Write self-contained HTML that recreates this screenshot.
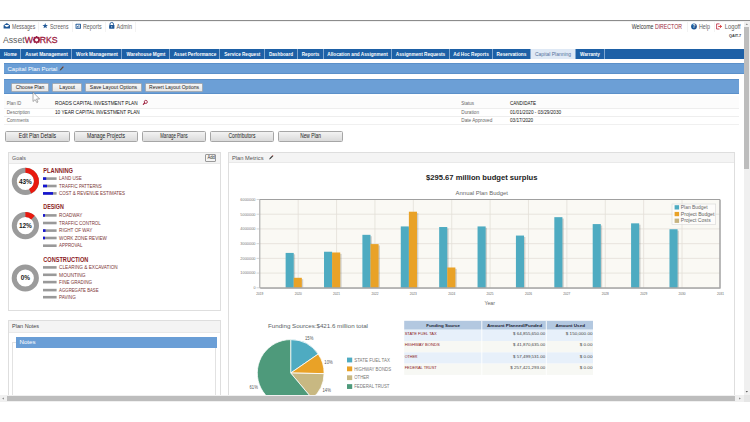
<!DOCTYPE html>
<html><head><meta charset="utf-8">
<style>
*{box-sizing:border-box;margin:0;padding:0}
html,body{width:750px;height:422px;overflow:hidden;background:#fff;font-family:"Liberation Sans",sans-serif;color:#333}
#w{position:absolute;left:0;top:0;width:750px;height:422px;background:#fff}
.a{position:absolute}
.nav{position:absolute;left:0;top:48.6px;width:743.5px;height:10.3px;background:#1d60a6}
.tab{position:absolute;top:0;height:10.3px;border-right:1px solid #7fa6d0}
.btn{position:absolute;height:9px;background:linear-gradient(#f6f6f6,#e6e6e6);border:0.8px solid #a3abb5;border-radius:1px}
.btn2{position:absolute;top:131px;height:10.5px;background:linear-gradient(#f3f3f3,#dadada);border:0.9px solid #a6a6a6;border-radius:1.5px}
.panel{position:absolute;border:1px solid #dedede;background:#fff}
.ph{position:absolute;left:0;top:0;right:0;background:#f4f4f4;border-bottom:1px solid #e9e9e9}
.sep{position:absolute;top:21.5px;width:0.8px;height:10.5px;background:#f3f3f3}
</style></head><body><div id="w">
<div class="a" style="left:0;top:19.6px;width:750px;height:1.3px;background:#8c8c8c"></div>
<div class="a" style="left:0;top:21px;width:744px;height:1px;background:#f2f2f2"></div>
<div class="sep" style="left:38px"></div>
<div class="sep" style="left:71.5px"></div>
<div class="sep" style="left:104.5px"></div>
<div class="sep" style="left:135px"></div>
<div class="sep" style="left:686.5px"></div>
<div class="sep" style="left:713.5px"></div>
<div class="nav">
<div class="tab" style="left:0;width:20.8px"></div>
<div class="tab" style="left:20.8px;width:51.4px"></div>
<div class="tab" style="left:72.2px;width:49.6px"></div>
<div class="tab" style="left:121.8px;width:48.2px"></div>
<div class="tab" style="left:170px;width:50px"></div>
<div class="tab" style="left:220px;width:44.5px"></div>
<div class="tab" style="left:264.5px;width:33px"></div>
<div class="tab" style="left:297.5px;width:26px"></div>
<div class="tab" style="left:323.5px;width:68px"></div>
<div class="tab" style="left:391.5px;width:58px"></div>
<div class="tab" style="left:449.5px;width:43px"></div>
<div class="tab" style="left:492.5px;width:38px"></div>
<div class="tab" style="left:530.5px;width:45px;background:#dfe9f5"></div>
<div class="tab" style="left:575.5px;width:29px"></div>
</div>
<div class="a" style="left:4px;top:63.1px;width:739.5px;height:11.1px;background:#6a9ed6;border-top:0.6px solid #5b90c9;border-bottom:0.6px solid #5b90c9"></div>
<div class="a" style="left:4px;top:79px;width:735px;height:15.1px;background:#6c9fd6;border-top:0.6px solid #5b90c9;border-bottom:0.6px solid #5b90c9"></div>
<div class="btn" style="left:10.9px;top:82.8px;width:37.9px"></div>
<div class="btn" style="left:52px;top:82.8px;width:30.4px"></div>
<div class="btn" style="left:84.7px;top:82.8px;width:57.4px"></div>
<div class="btn" style="left:144.9px;top:82.8px;width:58.2px"></div>
<div class="a" style="left:4px;top:96px;width:735px;height:13.2px;background:#fcfcfc;border-bottom:1px solid #eeeeee"></div>
<div class="a" style="left:4px;top:109.2px;width:735px;height:8px;border-bottom:1px solid #eeeeee"></div>
<div class="a" style="left:4px;top:117.2px;width:735px;height:8px;border-bottom:1px solid #f0f0f0"></div>
<div class="btn2" style="left:5px;width:65px"></div>
<div class="btn2" style="left:74px;width:64px"></div>
<div class="btn2" style="left:142px;width:64px"></div>
<div class="btn2" style="left:210px;width:64px"></div>
<div class="btn2" style="left:278px;width:65px"></div>
<div class="panel" style="left:8px;top:152px;width:213px;height:159px">
 <div class="ph" style="height:11.3px"></div>
 <div class="a" style="left:196.1px;top:0.5px;width:11.2px;height:8.2px;border:0.9px solid #9a9a9a;border-radius:1px;background:#f4f4f4"></div>
</div>
<div class="panel" style="left:8px;top:320px;width:213px;height:90px">
 <div class="ph" style="height:11.5px"></div>
 <div class="a" style="left:3.2px;top:20.7px;width:204px;height:70px;border:1px solid #e2e2e2"></div>
 <div class="a" style="left:7px;top:15.7px;width:201.3px;height:11.2px;background:#6a9ed6"></div>
</div>
<div class="panel" style="left:228px;top:152px;width:507px;height:260px">
 <div class="ph" style="height:10.1px"></div>
</div>
<svg class="a" style="left:0;top:0" width="750" height="422" viewBox="0 0 750 422">
<circle cx="25.4" cy="181.3" r="11.1" fill="none" stroke="#9b9b9b" stroke-width="5.0"/>
<path d="M25.4 170.20000000000002 A11.1 11.1 0 0 1 30.13 191.34" fill="none" stroke="#e8190f" stroke-width="5.0"/>
<text x="25.4" y="183.70" font-family="Liberation Sans, sans-serif" font-size="6.8" fill="#1a1a1a" text-anchor="middle" font-weight="bold" textLength="13" lengthAdjust="spacingAndGlyphs">43%</text>
<text x="43.3" y="172.75" font-family="Liberation Sans, sans-serif" font-size="6.6" fill="#8b1c24" font-weight="bold" textLength="29.7" lengthAdjust="spacingAndGlyphs">PLANNING</text>
<rect x="43" y="177.30" width="13.6" height="2.6" fill="#999"/>
<rect x="43" y="177.30" width="3.2" height="2.6" fill="#1414d2"/>
<text x="59.1" y="180.35" font-family="Liberation Sans, sans-serif" font-size="4.9" fill="#7b3535" textLength="22.7" lengthAdjust="spacingAndGlyphs">LAND USE</text>
<rect x="43" y="184.70" width="13.6" height="2.6" fill="#999"/>
<rect x="43" y="184.70" width="4" height="2.6" fill="#1414d2"/>
<text x="59.1" y="187.75" font-family="Liberation Sans, sans-serif" font-size="4.9" fill="#7b3535" textLength="42.6" lengthAdjust="spacingAndGlyphs">TRAFFIC PATTERNS</text>
<rect x="43" y="192.10" width="13.6" height="2.6" fill="#999"/>
<rect x="43" y="192.10" width="10" height="2.6" fill="#1414d2"/>
<text x="59.1" y="195.15" font-family="Liberation Sans, sans-serif" font-size="4.9" fill="#7b3535" textLength="66" lengthAdjust="spacingAndGlyphs">COST &amp; REVENUE ESTIMATES</text>
<circle cx="25.4" cy="225.7" r="11.1" fill="none" stroke="#9b9b9b" stroke-width="5.0"/>
<path d="M25.4 214.6 A11.1 11.1 0 0 1 33.00 217.61" fill="none" stroke="#e8190f" stroke-width="5.0"/>
<text x="25.4" y="228.10" font-family="Liberation Sans, sans-serif" font-size="6.8" fill="#1a1a1a" text-anchor="middle" font-weight="bold" textLength="13" lengthAdjust="spacingAndGlyphs">12%</text>
<text x="43.3" y="209.25" font-family="Liberation Sans, sans-serif" font-size="6.6" fill="#8b1c24" font-weight="bold" textLength="20.6" lengthAdjust="spacingAndGlyphs">DESIGN</text>
<rect x="43" y="214.10" width="13.6" height="2.6" fill="#999"/>
<rect x="43" y="214.10" width="2" height="2.6" fill="#1414d2"/>
<text x="59.1" y="217.15" font-family="Liberation Sans, sans-serif" font-size="4.9" fill="#7b3535" textLength="23.3" lengthAdjust="spacingAndGlyphs">ROADWAY</text>
<rect x="43" y="221.70" width="13.6" height="2.6" fill="#999"/>
<text x="59.1" y="224.75" font-family="Liberation Sans, sans-serif" font-size="4.9" fill="#7b3535" textLength="41.7" lengthAdjust="spacingAndGlyphs">TRAFFIC CONTROL</text>
<rect x="43" y="229.30" width="13.6" height="2.6" fill="#999"/>
<rect x="43" y="229.30" width="2.5" height="2.6" fill="#1414d2"/>
<text x="59.1" y="232.35" font-family="Liberation Sans, sans-serif" font-size="4.9" fill="#7b3535" textLength="33.2" lengthAdjust="spacingAndGlyphs">RIGHT OF WAY</text>
<rect x="43" y="236.70" width="13.6" height="2.6" fill="#999"/>
<rect x="43" y="236.70" width="2" height="2.6" fill="#1414d2"/>
<text x="59.1" y="239.75" font-family="Liberation Sans, sans-serif" font-size="4.9" fill="#7b3535" textLength="47.8" lengthAdjust="spacingAndGlyphs">WORK ZONE REVIEW</text>
<rect x="43" y="244.40" width="13.6" height="2.6" fill="#999"/>
<text x="59.1" y="247.45" font-family="Liberation Sans, sans-serif" font-size="4.9" fill="#7b3535" textLength="23.4" lengthAdjust="spacingAndGlyphs">APPROVAL</text>
<circle cx="25.3" cy="278" r="11.1" fill="none" stroke="#9b9b9b" stroke-width="5.0"/>
<text x="25.3" y="280.40" font-family="Liberation Sans, sans-serif" font-size="6.8" fill="#1a1a1a" text-anchor="middle" font-weight="bold" textLength="9.3" lengthAdjust="spacingAndGlyphs">0%</text>
<text x="43.3" y="261.75" font-family="Liberation Sans, sans-serif" font-size="6.6" fill="#8b1c24" font-weight="bold" textLength="45" lengthAdjust="spacingAndGlyphs">CONSTRUCTION</text>
<rect x="43" y="266.10" width="13.6" height="2.6" fill="#999"/>
<text x="59.1" y="269.15" font-family="Liberation Sans, sans-serif" font-size="4.9" fill="#7b3535" textLength="58.6" lengthAdjust="spacingAndGlyphs">CLEARING &amp; EXCAVATION</text>
<rect x="43" y="273.50" width="13.6" height="2.6" fill="#999"/>
<text x="59.1" y="276.55" font-family="Liberation Sans, sans-serif" font-size="4.9" fill="#7b3535" textLength="26.5" lengthAdjust="spacingAndGlyphs">MOUNTING</text>
<rect x="43" y="280.80" width="13.6" height="2.6" fill="#999"/>
<text x="59.1" y="283.85" font-family="Liberation Sans, sans-serif" font-size="4.9" fill="#7b3535" textLength="32.9" lengthAdjust="spacingAndGlyphs">FINE GRADING</text>
<rect x="43" y="288.80" width="13.6" height="2.6" fill="#999"/>
<text x="59.1" y="291.85" font-family="Liberation Sans, sans-serif" font-size="4.9" fill="#7b3535" textLength="39.5" lengthAdjust="spacingAndGlyphs">AGGREGATE BASE</text>
<rect x="43" y="295.90" width="13.6" height="2.6" fill="#999"/>
<text x="59.1" y="298.95" font-family="Liberation Sans, sans-serif" font-size="4.9" fill="#7b3535" textLength="16.6" lengthAdjust="spacingAndGlyphs">PAVING</text>
<rect x="259.8" y="199.5" width="460.59999999999997" height="88.30000000000001" fill="#faf9f4"/>
<line x1="259.8" y1="214.22" x2="720.4" y2="214.22" stroke="#e3e0d8" stroke-width="0.8"/>
<line x1="259.8" y1="228.93" x2="720.4" y2="228.93" stroke="#e3e0d8" stroke-width="0.8"/>
<line x1="259.8" y1="243.65" x2="720.4" y2="243.65" stroke="#e3e0d8" stroke-width="0.8"/>
<line x1="259.8" y1="258.37" x2="720.4" y2="258.37" stroke="#e3e0d8" stroke-width="0.8"/>
<line x1="259.8" y1="273.08" x2="720.4" y2="273.08" stroke="#e3e0d8" stroke-width="0.8"/>
<line x1="298.18" y1="199.5" x2="298.18" y2="287.8" stroke="#e3e0d8" stroke-width="0.8"/>
<line x1="336.57" y1="199.5" x2="336.57" y2="287.8" stroke="#e3e0d8" stroke-width="0.8"/>
<line x1="374.95" y1="199.5" x2="374.95" y2="287.8" stroke="#e3e0d8" stroke-width="0.8"/>
<line x1="413.33" y1="199.5" x2="413.33" y2="287.8" stroke="#e3e0d8" stroke-width="0.8"/>
<line x1="451.72" y1="199.5" x2="451.72" y2="287.8" stroke="#e3e0d8" stroke-width="0.8"/>
<line x1="490.10" y1="199.5" x2="490.10" y2="287.8" stroke="#e3e0d8" stroke-width="0.8"/>
<line x1="528.48" y1="199.5" x2="528.48" y2="287.8" stroke="#e3e0d8" stroke-width="0.8"/>
<line x1="566.87" y1="199.5" x2="566.87" y2="287.8" stroke="#e3e0d8" stroke-width="0.8"/>
<line x1="605.25" y1="199.5" x2="605.25" y2="287.8" stroke="#e3e0d8" stroke-width="0.8"/>
<line x1="643.63" y1="199.5" x2="643.63" y2="287.8" stroke="#e3e0d8" stroke-width="0.8"/>
<line x1="682.02" y1="199.5" x2="682.02" y2="287.8" stroke="#e3e0d8" stroke-width="0.8"/>
<rect x="287.03" y="254.32" width="8.1" height="33.48" fill="#000" fill-opacity="0.16"/>
<rect x="285.63" y="252.92" width="8.1" height="34.88" fill="#4eabc1"/>
<rect x="295.13" y="279.19" width="8.1" height="8.61" fill="#000" fill-opacity="0.16"/>
<rect x="293.73" y="277.79" width="8.1" height="10.01" fill="#e9a227"/>
<rect x="325.42" y="253.14" width="8.1" height="34.66" fill="#000" fill-opacity="0.16"/>
<rect x="324.02" y="251.74" width="8.1" height="36.06" fill="#4eabc1"/>
<rect x="333.52" y="253.88" width="8.1" height="33.92" fill="#000" fill-opacity="0.16"/>
<rect x="332.12" y="252.48" width="8.1" height="35.32" fill="#e9a227"/>
<rect x="363.80" y="236.22" width="8.1" height="51.58" fill="#000" fill-opacity="0.16"/>
<rect x="362.40" y="234.82" width="8.1" height="52.98" fill="#4eabc1"/>
<rect x="371.90" y="245.49" width="8.1" height="42.31" fill="#000" fill-opacity="0.16"/>
<rect x="370.50" y="244.09" width="8.1" height="43.71" fill="#e9a227"/>
<rect x="402.18" y="227.83" width="8.1" height="59.97" fill="#000" fill-opacity="0.16"/>
<rect x="400.78" y="226.43" width="8.1" height="61.37" fill="#4eabc1"/>
<rect x="410.28" y="213.11" width="8.1" height="74.69" fill="#000" fill-opacity="0.16"/>
<rect x="408.88" y="211.71" width="8.1" height="76.09" fill="#e9a227"/>
<rect x="440.57" y="228.42" width="8.1" height="59.38" fill="#000" fill-opacity="0.16"/>
<rect x="439.17" y="227.02" width="8.1" height="60.78" fill="#4eabc1"/>
<rect x="448.67" y="268.89" width="8.1" height="18.91" fill="#000" fill-opacity="0.16"/>
<rect x="447.27" y="267.49" width="8.1" height="20.31" fill="#e9a227"/>
<rect x="478.95" y="227.83" width="8.1" height="59.97" fill="#000" fill-opacity="0.16"/>
<rect x="477.55" y="226.43" width="8.1" height="61.37" fill="#4eabc1"/>
<rect x="517.33" y="236.96" width="8.1" height="50.84" fill="#000" fill-opacity="0.16"/>
<rect x="515.93" y="235.56" width="8.1" height="52.24" fill="#4eabc1"/>
<rect x="555.72" y="218.56" width="8.1" height="69.24" fill="#000" fill-opacity="0.16"/>
<rect x="554.32" y="217.16" width="8.1" height="70.64" fill="#4eabc1"/>
<rect x="594.10" y="225.48" width="8.1" height="62.32" fill="#000" fill-opacity="0.16"/>
<rect x="592.70" y="224.08" width="8.1" height="63.72" fill="#4eabc1"/>
<rect x="632.48" y="224.74" width="8.1" height="63.06" fill="#000" fill-opacity="0.16"/>
<rect x="631.08" y="223.34" width="8.1" height="64.46" fill="#4eabc1"/>
<rect x="670.87" y="230.63" width="8.1" height="57.17" fill="#000" fill-opacity="0.16"/>
<rect x="669.47" y="229.23" width="8.1" height="58.57" fill="#4eabc1"/>
<rect x="259.8" y="199.5" width="459.99999999999994" height="88.30000000000001" fill="none" stroke="#a0a0a0" stroke-width="1.0"/>
<path d="M720.3 200.0 L720.3 288.40000000000003 L260.3 288.40000000000003" fill="none" stroke="#b0b0b0" stroke-width="1.0"/>
<text x="255.5" y="289.10" font-family="Liberation Sans, sans-serif" font-size="3.7" fill="#777" text-anchor="end">0</text>
<line x1="256.5" y1="287.80" x2="259" y2="287.80" stroke="#aaa" stroke-width="0.5"/>
<text x="255.5" y="274.38" font-family="Liberation Sans, sans-serif" font-size="3.7" fill="#777" text-anchor="end" textLength="15.2" lengthAdjust="spacingAndGlyphs">1000000</text>
<line x1="256.5" y1="273.08" x2="259" y2="273.08" stroke="#aaa" stroke-width="0.5"/>
<text x="255.5" y="259.67" font-family="Liberation Sans, sans-serif" font-size="3.7" fill="#777" text-anchor="end" textLength="15.2" lengthAdjust="spacingAndGlyphs">2000000</text>
<line x1="256.5" y1="258.37" x2="259" y2="258.37" stroke="#aaa" stroke-width="0.5"/>
<text x="255.5" y="244.95" font-family="Liberation Sans, sans-serif" font-size="3.7" fill="#777" text-anchor="end" textLength="15.2" lengthAdjust="spacingAndGlyphs">3000000</text>
<line x1="256.5" y1="243.65" x2="259" y2="243.65" stroke="#aaa" stroke-width="0.5"/>
<text x="255.5" y="230.23" font-family="Liberation Sans, sans-serif" font-size="3.7" fill="#777" text-anchor="end" textLength="15.2" lengthAdjust="spacingAndGlyphs">4000000</text>
<line x1="256.5" y1="228.93" x2="259" y2="228.93" stroke="#aaa" stroke-width="0.5"/>
<text x="255.5" y="215.52" font-family="Liberation Sans, sans-serif" font-size="3.7" fill="#777" text-anchor="end" textLength="15.2" lengthAdjust="spacingAndGlyphs">5000000</text>
<line x1="256.5" y1="214.22" x2="259" y2="214.22" stroke="#aaa" stroke-width="0.5"/>
<text x="255.5" y="200.80" font-family="Liberation Sans, sans-serif" font-size="3.7" fill="#777" text-anchor="end" textLength="15.2" lengthAdjust="spacingAndGlyphs">6000000</text>
<line x1="256.5" y1="199.50" x2="259" y2="199.50" stroke="#aaa" stroke-width="0.5"/>
<text x="259.80" y="295.0" font-family="Liberation Sans, sans-serif" font-size="3.9" fill="#666" text-anchor="middle" textLength="7" lengthAdjust="spacingAndGlyphs">2019</text>
<text x="298.18" y="295.0" font-family="Liberation Sans, sans-serif" font-size="3.9" fill="#666" text-anchor="middle" textLength="7" lengthAdjust="spacingAndGlyphs">2020</text>
<text x="336.57" y="295.0" font-family="Liberation Sans, sans-serif" font-size="3.9" fill="#666" text-anchor="middle" textLength="7" lengthAdjust="spacingAndGlyphs">2021</text>
<text x="374.95" y="295.0" font-family="Liberation Sans, sans-serif" font-size="3.9" fill="#666" text-anchor="middle" textLength="7" lengthAdjust="spacingAndGlyphs">2022</text>
<text x="413.33" y="295.0" font-family="Liberation Sans, sans-serif" font-size="3.9" fill="#666" text-anchor="middle" textLength="7" lengthAdjust="spacingAndGlyphs">2023</text>
<text x="451.72" y="295.0" font-family="Liberation Sans, sans-serif" font-size="3.9" fill="#666" text-anchor="middle" textLength="7" lengthAdjust="spacingAndGlyphs">2024</text>
<text x="490.10" y="295.0" font-family="Liberation Sans, sans-serif" font-size="3.9" fill="#666" text-anchor="middle" textLength="7" lengthAdjust="spacingAndGlyphs">2025</text>
<text x="528.48" y="295.0" font-family="Liberation Sans, sans-serif" font-size="3.9" fill="#666" text-anchor="middle" textLength="7" lengthAdjust="spacingAndGlyphs">2026</text>
<text x="566.87" y="295.0" font-family="Liberation Sans, sans-serif" font-size="3.9" fill="#666" text-anchor="middle" textLength="7" lengthAdjust="spacingAndGlyphs">2027</text>
<text x="605.25" y="295.0" font-family="Liberation Sans, sans-serif" font-size="3.9" fill="#666" text-anchor="middle" textLength="7" lengthAdjust="spacingAndGlyphs">2028</text>
<text x="643.63" y="295.0" font-family="Liberation Sans, sans-serif" font-size="3.9" fill="#666" text-anchor="middle" textLength="7" lengthAdjust="spacingAndGlyphs">2029</text>
<text x="682.02" y="295.0" font-family="Liberation Sans, sans-serif" font-size="3.9" fill="#666" text-anchor="middle" textLength="7" lengthAdjust="spacingAndGlyphs">2030</text>
<text x="720.40" y="295.0" font-family="Liberation Sans, sans-serif" font-size="3.9" fill="#666" text-anchor="middle" textLength="7" lengthAdjust="spacingAndGlyphs">2031</text>
<text x="484.4" y="305.4" font-family="Liberation Sans, sans-serif" font-size="5.6" fill="#666" textLength="10.6" lengthAdjust="spacingAndGlyphs">Year</text>
<text x="426" y="180.2" font-family="Liberation Sans, sans-serif" font-size="7.6" fill="#222" font-weight="bold" textLength="111.4" lengthAdjust="spacingAndGlyphs">$295.67 million budget surplus</text>
<text x="455.6" y="195.2" font-family="Liberation Sans, sans-serif" font-size="5.1" fill="#666" textLength="52.4" lengthAdjust="spacingAndGlyphs">Annual Plan Budget</text>
<rect x="672" y="204" width="43.7" height="20.4" fill="#fff" fill-opacity="0.55" stroke="#d8d8d8" stroke-width="0.6"/>
<rect x="674.6" y="205.20" width="4.5" height="4.3" fill="#4eabc1"/>
<text x="680.8" y="209.00" font-family="Liberation Sans, sans-serif" font-size="4.9" fill="#666" textLength="26.7" lengthAdjust="spacingAndGlyphs">Plan Budget</text>
<rect x="674.6" y="211.90" width="4.5" height="4.3" fill="#e9a227"/>
<text x="680.8" y="215.70" font-family="Liberation Sans, sans-serif" font-size="4.9" fill="#666" textLength="33.6" lengthAdjust="spacingAndGlyphs">Project Budget</text>
<rect x="674.6" y="218.60" width="4.5" height="4.3" fill="#c6b37f"/>
<text x="680.8" y="222.40" font-family="Liberation Sans, sans-serif" font-size="4.9" fill="#666" textLength="29.9" lengthAdjust="spacingAndGlyphs">Project Costs</text>
<text x="268" y="328.1" font-family="Liberation Sans, sans-serif" font-size="6.1" fill="#5a5f66" textLength="100" lengthAdjust="spacingAndGlyphs">Funding Sources:$421.6 million total</text>
<path d="M290.7 373 L290.70 339.60 A33.4 33.4 0 0 1 318.21 354.05 Z" fill="#4eabc1" stroke="#fff" stroke-width="0.8"/>
<path d="M290.7 373 L318.21 354.05 A33.4 33.4 0 0 1 324.09 373.63 Z" fill="#e9a227" stroke="#fff" stroke-width="0.8"/>
<path d="M290.7 373 L324.09 373.63 A33.4 33.4 0 0 1 312.15 398.60 Z" fill="#c8b882" stroke="#fff" stroke-width="0.8"/>
<path d="M290.7 373 L312.15 398.60 A33.4 33.4 0 1 1 290.70 339.60 Z" fill="#4e9a7b" stroke="#fff" stroke-width="0.8"/>
<text x="309.2" y="339.8" font-family="Liberation Sans, sans-serif" font-size="4.8" fill="#555" text-anchor="middle" textLength="8.3" lengthAdjust="spacingAndGlyphs">15%</text>
<text x="328.5" y="363.7" font-family="Liberation Sans, sans-serif" font-size="4.8" fill="#555" text-anchor="middle" textLength="8.3" lengthAdjust="spacingAndGlyphs">10%</text>
<text x="326.7" y="391.5" font-family="Liberation Sans, sans-serif" font-size="4.8" fill="#555" text-anchor="middle" textLength="8.3" lengthAdjust="spacingAndGlyphs">14%</text>
<text x="253.7" y="388.5" font-family="Liberation Sans, sans-serif" font-size="4.8" fill="#555" text-anchor="middle" textLength="8.3" lengthAdjust="spacingAndGlyphs">61%</text>
<rect x="347" y="357.60" width="5.2" height="4.8" fill="#4eabc1"/>
<text x="354.2" y="361.75" font-family="Liberation Sans, sans-serif" font-size="4.9" fill="#777" textLength="35.8" lengthAdjust="spacingAndGlyphs">STATE FUEL TAX</text>
<rect x="347" y="366.45" width="5.2" height="4.8" fill="#e9a227"/>
<text x="354.2" y="370.60" font-family="Liberation Sans, sans-serif" font-size="4.9" fill="#777" textLength="36.9" lengthAdjust="spacingAndGlyphs">HIGHWAY BONDS</text>
<rect x="347" y="375.30" width="5.2" height="4.8" fill="#c8b882"/>
<text x="354.2" y="379.45" font-family="Liberation Sans, sans-serif" font-size="4.9" fill="#777" textLength="15" lengthAdjust="spacingAndGlyphs">OTHER</text>
<rect x="347" y="384.15" width="5.2" height="4.8" fill="#4e9a7b"/>
<text x="354.2" y="388.30" font-family="Liberation Sans, sans-serif" font-size="4.9" fill="#777" textLength="35.3" lengthAdjust="spacingAndGlyphs">FEDERAL TRUST</text>
<rect x="404.2" y="320.8" width="188.8" height="8.9" fill="#b3c8e0"/>
<rect x="404.2" y="329.70" width="188.8" height="11.3" fill="#e7f0fa"/>
<text x="404.7" y="335.10" font-family="Liberation Sans, sans-serif" font-size="3.9" fill="#8b1a1a" textLength="32" lengthAdjust="spacingAndGlyphs">STATE FUEL TAX</text>
<text x="545.3" y="335.10" font-family="Liberation Sans, sans-serif" font-size="3.9" fill="#444" text-anchor="end" textLength="32.3" lengthAdjust="spacingAndGlyphs">$ 64,855,650.00</text>
<text x="592.5" y="335.10" font-family="Liberation Sans, sans-serif" font-size="3.9" fill="#444" text-anchor="end" textLength="26.7" lengthAdjust="spacingAndGlyphs">$ 150,000.00</text>
<rect x="404.2" y="341.00" width="188.8" height="11.3" fill="#f7f8f4"/>
<text x="404.7" y="346.40" font-family="Liberation Sans, sans-serif" font-size="3.9" fill="#8b1a1a" textLength="35" lengthAdjust="spacingAndGlyphs">HIGHWAY BONDS</text>
<text x="545.3" y="346.40" font-family="Liberation Sans, sans-serif" font-size="3.9" fill="#444" text-anchor="end" textLength="32.3" lengthAdjust="spacingAndGlyphs">$ 41,870,635.00</text>
<text x="592.5" y="346.40" font-family="Liberation Sans, sans-serif" font-size="3.9" fill="#444" text-anchor="end" textLength="12.8" lengthAdjust="spacingAndGlyphs">$ 0.00</text>
<rect x="404.2" y="352.30" width="188.8" height="11.3" fill="#e7f0fa"/>
<text x="404.7" y="357.70" font-family="Liberation Sans, sans-serif" font-size="3.9" fill="#8b1a1a" textLength="12.8" lengthAdjust="spacingAndGlyphs">OTHER</text>
<text x="545.3" y="357.70" font-family="Liberation Sans, sans-serif" font-size="3.9" fill="#444" text-anchor="end" textLength="32.3" lengthAdjust="spacingAndGlyphs">$ 57,499,531.00</text>
<text x="592.5" y="357.70" font-family="Liberation Sans, sans-serif" font-size="3.9" fill="#444" text-anchor="end" textLength="12.8" lengthAdjust="spacingAndGlyphs">$ 0.00</text>
<rect x="404.2" y="363.60" width="188.8" height="11.3" fill="#f7f8f4"/>
<text x="404.7" y="369.00" font-family="Liberation Sans, sans-serif" font-size="3.9" fill="#8b1a1a" textLength="32" lengthAdjust="spacingAndGlyphs">FEDERAL TRUST</text>
<text x="545.3" y="369.00" font-family="Liberation Sans, sans-serif" font-size="3.9" fill="#444" text-anchor="end" textLength="35" lengthAdjust="spacingAndGlyphs">$ 257,421,293.00</text>
<text x="592.5" y="369.00" font-family="Liberation Sans, sans-serif" font-size="3.9" fill="#444" text-anchor="end" textLength="12.8" lengthAdjust="spacingAndGlyphs">$ 0.00</text>
<line x1="481.8" y1="320.8" x2="481.8" y2="375" stroke="#fff" stroke-width="0.9"/>
<line x1="546.3" y1="320.8" x2="546.3" y2="375" stroke="#fff" stroke-width="0.9"/>
<text x="443.1" y="326.9" font-family="Liberation Sans, sans-serif" font-size="3.9" fill="#1d2535" text-anchor="middle" font-weight="bold" textLength="33.8" lengthAdjust="spacingAndGlyphs">Funding Source</text>
<text x="514.5" y="326.9" font-family="Liberation Sans, sans-serif" font-size="3.9" fill="#1d2535" text-anchor="middle" font-weight="bold" textLength="55" lengthAdjust="spacingAndGlyphs">Amount Planned/Funded</text>
<text x="570.2" y="326.9" font-family="Liberation Sans, sans-serif" font-size="3.9" fill="#1d2535" text-anchor="middle" font-weight="bold" textLength="29.5" lengthAdjust="spacingAndGlyphs">Amount Used</text>
<path d="M3.6 25.2 L6.8 23 L10 25.2 L10 28.6 L3.6 28.6 Z" fill="#1f5796"/>
<path d="M4.8 25.0 L8.8 25.0 L8.8 26.1 L6.8 27.1 L4.8 26.1 Z" fill="#fff"/>
<polygon points="45.20,23.10 45.91,25.03 47.96,25.10 46.34,26.37 46.90,28.35 45.20,27.20 43.50,28.35 44.06,26.37 42.44,25.10 44.49,25.03" fill="#1f5796"/>
<rect x="75.6" y="23.8" width="5.3" height="4.9" rx="0.5" fill="#1f5796"/>
<rect x="76.5" y="24.7" width="3.5" height="3.1" fill="#fff"/>
<rect x="77.1" y="26.0" width="0.8" height="1.5" fill="#1f5796"/><rect x="78.5" y="25.2" width="0.8" height="2.3" fill="#1f5796"/>
<path d="M110 25.2 L110 24.2 A1.75 1.75 0 0 1 113.5 24.2 L113.5 25.2" fill="none" stroke="#1f5796" stroke-width="0.9"/>
<rect x="109.1" y="25.1" width="5.3" height="3.6" rx="0.4" fill="#1f5796"/>
<rect x="111.5" y="26" width="0.6" height="1.6" fill="#fff"/>
<circle cx="694" cy="26.5" r="2.9" fill="#1f5796"/>
<text x="694" y="28.3" font-family="Liberation Sans, sans-serif" font-size="4.6" font-weight="bold" fill="#fff" text-anchor="middle">?</text>
<path d="M719.5 23.9 L716.6 23.9 L716.6 29 L719.5 29" fill="none" stroke="#b8203a" stroke-width="0.8"/>
<path d="M718.2 26.45 L721.3 26.45 M720.1 25.1 L721.6 26.45 L720.1 27.8" fill="none" stroke="#d42a2a" stroke-width="0.9"/>
<circle cx="36.6" cy="39.8" r="2.45" fill="none" stroke="#9c1d42" stroke-width="1.7"/>
<rect x="36.00" y="36.05" width="1.2" height="1.2" fill="#9c1d42" transform="rotate(0 36.6 39.8)"/>
<rect x="36.00" y="36.05" width="1.2" height="1.2" fill="#9c1d42" transform="rotate(45 36.6 39.8)"/>
<rect x="36.00" y="36.05" width="1.2" height="1.2" fill="#9c1d42" transform="rotate(90 36.6 39.8)"/>
<rect x="36.00" y="36.05" width="1.2" height="1.2" fill="#9c1d42" transform="rotate(135 36.6 39.8)"/>
<rect x="36.00" y="36.05" width="1.2" height="1.2" fill="#9c1d42" transform="rotate(180 36.6 39.8)"/>
<rect x="36.00" y="36.05" width="1.2" height="1.2" fill="#9c1d42" transform="rotate(225 36.6 39.8)"/>
<rect x="36.00" y="36.05" width="1.2" height="1.2" fill="#9c1d42" transform="rotate(270 36.6 39.8)"/>
<rect x="36.00" y="36.05" width="1.2" height="1.2" fill="#9c1d42" transform="rotate(315 36.6 39.8)"/>
<path d="M59.6 70.6 L60.0 69.39999999999999 L62.6 66.6 L63.5 67.5 L60.800000000000004 70.19999999999999 Z" fill="#5a4a3a"/>
<path d="M62.6 66.6 L63.5 67.5 L63.9 67.1 L63.0 66.19999999999999 Z" fill="#c0392b"/>
<path d="M269.2 159.4 L269.59999999999997 158.20000000000002 L272.2 155.4 L273.09999999999997 156.3 L270.4 159.0 Z" fill="#333"/>
<path d="M272.2 155.4 L273.09999999999997 156.3 L273.5 155.9 L272.59999999999997 155.0 Z" fill="#c0392b"/>
<circle cx="145.8" cy="101.9" r="1.55" fill="none" stroke="#9b1b3a" stroke-width="0.85"/>
<path d="M144.7 103 L143.3 104.4" stroke="#9b1b3a" stroke-width="1.1" stroke-linecap="round"/>
<text x="12" y="28.6" font-family="Liberation Sans, sans-serif" font-size="6.5" fill="#606060" textLength="23.2" lengthAdjust="spacingAndGlyphs">Messages</text>
<text x="50" y="28.6" font-family="Liberation Sans, sans-serif" font-size="6.5" fill="#606060" textLength="18.4" lengthAdjust="spacingAndGlyphs">Screens</text>
<text x="83" y="28.6" font-family="Liberation Sans, sans-serif" font-size="6.5" fill="#606060" textLength="18.6" lengthAdjust="spacingAndGlyphs">Reports</text>
<text x="116.6" y="28.6" font-family="Liberation Sans, sans-serif" font-size="6.5" fill="#606060" textLength="15.4" lengthAdjust="spacingAndGlyphs">Admin</text>
<text x="699" y="28.6" font-family="Liberation Sans, sans-serif" font-size="6.5" fill="#606060" textLength="10.9" lengthAdjust="spacingAndGlyphs">Help</text>
<text x="724.8" y="28.6" font-family="Liberation Sans, sans-serif" font-size="6.5" fill="#606060" textLength="15.9" lengthAdjust="spacingAndGlyphs">Logoff</text>
<text x="631.8" y="28.5" font-family="Liberation Sans, sans-serif" font-size="6.5" textLength="50.2" lengthAdjust="spacingAndGlyphs"><tspan fill="#333">Welcome </tspan><tspan fill="#9b2a3a">DIRECTOR</tspan></text>
<text x="729" y="37.4" font-family="Liberation Sans, sans-serif" font-size="4.2" fill="#3a3a3a" font-weight="bold" textLength="12.2" lengthAdjust="spacingAndGlyphs">QAIT-7</text>
<text x="3" y="43.1" font-family="Liberation Sans, sans-serif" font-size="8.7" textLength="54.5" lengthAdjust="spacingAndGlyphs"><tspan fill="#5a5a5a">Asset</tspan><tspan fill="#9c1d42" stroke="#9c1d42" stroke-width="0.3">W</tspan><tspan fill="transparent">O</tspan><tspan fill="#9c1d42" stroke="#9c1d42" stroke-width="0.3">RKS</tspan></text>
<text x="10.40" y="55.7" font-family="Liberation Sans, sans-serif" font-size="5.5" fill="#fff" text-anchor="middle" font-weight="bold" textLength="13" lengthAdjust="spacingAndGlyphs">Home</text>
<text x="46.50" y="55.7" font-family="Liberation Sans, sans-serif" font-size="5.5" fill="#fff" text-anchor="middle" font-weight="bold" textLength="42.6" lengthAdjust="spacingAndGlyphs">Asset Management</text>
<text x="97.00" y="55.7" font-family="Liberation Sans, sans-serif" font-size="5.5" fill="#fff" text-anchor="middle" font-weight="bold" textLength="41.8" lengthAdjust="spacingAndGlyphs">Work Management</text>
<text x="145.90" y="55.7" font-family="Liberation Sans, sans-serif" font-size="5.5" fill="#fff" text-anchor="middle" font-weight="bold" textLength="38.8" lengthAdjust="spacingAndGlyphs">Warehouse Mgmt</text>
<text x="195.00" y="55.7" font-family="Liberation Sans, sans-serif" font-size="5.5" fill="#fff" text-anchor="middle" font-weight="bold" textLength="42.5" lengthAdjust="spacingAndGlyphs">Asset Performance</text>
<text x="242.25" y="55.7" font-family="Liberation Sans, sans-serif" font-size="5.5" fill="#fff" text-anchor="middle" font-weight="bold" textLength="36" lengthAdjust="spacingAndGlyphs">Service Request</text>
<text x="281.00" y="55.7" font-family="Liberation Sans, sans-serif" font-size="5.5" fill="#fff" text-anchor="middle" font-weight="bold" textLength="24" lengthAdjust="spacingAndGlyphs">Dashboard</text>
<text x="310.50" y="55.7" font-family="Liberation Sans, sans-serif" font-size="5.5" fill="#fff" text-anchor="middle" font-weight="bold" textLength="17.5" lengthAdjust="spacingAndGlyphs">Reports</text>
<text x="357.50" y="55.7" font-family="Liberation Sans, sans-serif" font-size="5.5" fill="#fff" text-anchor="middle" font-weight="bold" textLength="60.5" lengthAdjust="spacingAndGlyphs">Allocation and Assignment</text>
<text x="420.50" y="55.7" font-family="Liberation Sans, sans-serif" font-size="5.5" fill="#fff" text-anchor="middle" font-weight="bold" textLength="49.4" lengthAdjust="spacingAndGlyphs">Assignment Requests</text>
<text x="471.00" y="55.7" font-family="Liberation Sans, sans-serif" font-size="5.5" fill="#fff" text-anchor="middle" font-weight="bold" textLength="35.5" lengthAdjust="spacingAndGlyphs">Ad Hoc Reports</text>
<text x="511.50" y="55.7" font-family="Liberation Sans, sans-serif" font-size="5.5" fill="#fff" text-anchor="middle" font-weight="bold" textLength="29.8" lengthAdjust="spacingAndGlyphs">Reservations</text>
<text x="553.00" y="55.7" font-family="Liberation Sans, sans-serif" font-size="5.5" fill="#55739c" text-anchor="middle" textLength="36" lengthAdjust="spacingAndGlyphs">Capital Planning</text>
<text x="590.00" y="55.7" font-family="Liberation Sans, sans-serif" font-size="5.5" fill="#fff" text-anchor="middle" font-weight="bold" textLength="19.8" lengthAdjust="spacingAndGlyphs">Warranty</text>
<text x="7.5" y="71.2" font-family="Liberation Sans, sans-serif" font-size="6.1" fill="#fff" textLength="49.8" lengthAdjust="spacingAndGlyphs">Capital Plan Portal</text>
<text x="30" y="89.3" font-family="Liberation Sans, sans-serif" font-size="6.1" fill="#1a1a1a" text-anchor="middle" textLength="28.5" lengthAdjust="spacingAndGlyphs">Choose Plan</text>
<text x="67.2" y="89.3" font-family="Liberation Sans, sans-serif" font-size="6.1" fill="#1a1a1a" text-anchor="middle" textLength="15.7" lengthAdjust="spacingAndGlyphs">Layout</text>
<text x="113.4" y="89.3" font-family="Liberation Sans, sans-serif" font-size="6.1" fill="#1a1a1a" text-anchor="middle" textLength="47.3" lengthAdjust="spacingAndGlyphs">Save Layout Options</text>
<text x="174" y="89.3" font-family="Liberation Sans, sans-serif" font-size="6.1" fill="#1a1a1a" text-anchor="middle" textLength="50" lengthAdjust="spacingAndGlyphs">Revert Layout Options</text>
<text x="37.5" y="138.4" font-family="Liberation Sans, sans-serif" font-size="6.3" fill="#1a1a1a" text-anchor="middle" textLength="37.3" lengthAdjust="spacingAndGlyphs">Edit Plan Details</text>
<text x="106" y="138.4" font-family="Liberation Sans, sans-serif" font-size="6.3" fill="#1a1a1a" text-anchor="middle" textLength="38" lengthAdjust="spacingAndGlyphs">Manage Projects</text>
<text x="174" y="138.4" font-family="Liberation Sans, sans-serif" font-size="6.3" fill="#1a1a1a" text-anchor="middle" textLength="27.4" lengthAdjust="spacingAndGlyphs">Manage Plans</text>
<text x="242" y="138.4" font-family="Liberation Sans, sans-serif" font-size="6.3" fill="#1a1a1a" text-anchor="middle" textLength="27" lengthAdjust="spacingAndGlyphs">Contributors</text>
<text x="310.5" y="138.4" font-family="Liberation Sans, sans-serif" font-size="6.3" fill="#1a1a1a" text-anchor="middle" textLength="20.7" lengthAdjust="spacingAndGlyphs">New Plan</text>
<text x="6.8" y="104.8" font-family="Liberation Sans, sans-serif" font-size="5.0" fill="#666" textLength="14.5" lengthAdjust="spacingAndGlyphs">Plan ID</text>
<text x="55" y="104.8" font-family="Liberation Sans, sans-serif" font-size="5.0" fill="#111" textLength="82.6" lengthAdjust="spacingAndGlyphs">ROADS CAPITAL INVESTMENT PLAN</text>
<text x="6.8" y="114.4" font-family="Liberation Sans, sans-serif" font-size="5.0" fill="#666" textLength="23" lengthAdjust="spacingAndGlyphs">Description</text>
<text x="55" y="114.4" font-family="Liberation Sans, sans-serif" font-size="5.0" fill="#111" textLength="84.7" lengthAdjust="spacingAndGlyphs">10 YEAR CAPITAL INVESTMENT PLAN</text>
<text x="6.8" y="122.1" font-family="Liberation Sans, sans-serif" font-size="5.0" fill="#666" textLength="22" lengthAdjust="spacingAndGlyphs">Comments</text>
<text x="461.3" y="104.8" font-family="Liberation Sans, sans-serif" font-size="5.0" fill="#666" textLength="12.8" lengthAdjust="spacingAndGlyphs">Status</text>
<text x="510" y="104.8" font-family="Liberation Sans, sans-serif" font-size="5.0" fill="#111" textLength="26" lengthAdjust="spacingAndGlyphs">CANDIDATE</text>
<text x="461.3" y="114.4" font-family="Liberation Sans, sans-serif" font-size="5.0" fill="#666" textLength="17.7" lengthAdjust="spacingAndGlyphs">Duration</text>
<text x="510" y="114.4" font-family="Liberation Sans, sans-serif" font-size="5.0" fill="#111" textLength="51.2" lengthAdjust="spacingAndGlyphs">01/01/2020 - 03/29/2030</text>
<text x="461.3" y="122.1" font-family="Liberation Sans, sans-serif" font-size="5.0" fill="#666" textLength="31" lengthAdjust="spacingAndGlyphs">Date Approved</text>
<text x="510" y="122.1" font-family="Liberation Sans, sans-serif" font-size="5.0" fill="#111" textLength="23.2" lengthAdjust="spacingAndGlyphs">03/17/2020</text>
<text x="12.1" y="160.0" font-family="Liberation Sans, sans-serif" font-size="6.2" fill="#555" textLength="13.8" lengthAdjust="spacingAndGlyphs">Goals</text>
<text x="207.4" y="159.4" font-family="Liberation Sans, sans-serif" font-size="5.2" fill="#333" textLength="7.6" lengthAdjust="spacingAndGlyphs">Add</text>
<text x="232" y="160.1" font-family="Liberation Sans, sans-serif" font-size="6.2" fill="#555" textLength="31.5" lengthAdjust="spacingAndGlyphs">Plan Metrics</text>
<text x="12.1" y="327.8" font-family="Liberation Sans, sans-serif" font-size="6.2" fill="#444" textLength="27" lengthAdjust="spacingAndGlyphs">Plan Notes</text>
<text x="19.5" y="344.2" font-family="Liberation Sans, sans-serif" font-size="5.9" fill="#fff" textLength="16" lengthAdjust="spacingAndGlyphs">Notes</text>
</svg>
<div class="a" style="left:743.5px;top:21px;width:6.5px;height:381px;background:#f0f0f0"></div>
<div class="a" style="left:744.3px;top:27.4px;width:4.8px;height:141.6px;background:#bdbdbd"></div>
<div class="a" style="left:0;top:395px;width:743.5px;height:7px;background:#f0f0f0"></div>
<div class="a" style="left:6.5px;top:396px;width:728.5px;height:5px;background:#bdbdbd"></div>
<div class="a" style="left:743.5px;top:395px;width:6.5px;height:7px;background:#e6e6e6"></div>
<svg class="a" style="left:0;top:0" width="750" height="422" viewBox="0 0 750 422">
<path d="M745.6 25 L746.8 23.6 L748 25 Z" fill="#8a8a8a"/>
<path d="M745.6 391 L746.8 392.4 L748 391 Z" fill="#5a5a5a"/>
<path d="M3.6 397.4 L2.4 398.5 L3.6 399.6 Z" fill="#5a5a5a"/>
<path d="M739.4 397.4 L740.6 398.5 L739.4 399.6 Z" fill="#5a5a5a"/>
<path d="M33 92.2 L33 101.5 L35.2 99.6 L36.8 102.6 L38 102 L36.5 99 L39.6 99 Z" fill="#fff" stroke="#777" stroke-width="0.6" stroke-linejoin="round"/>
</svg>
<div class="a" style="left:0;top:402px;width:750px;height:20px;background:#fff"></div>
</div></body></html>
